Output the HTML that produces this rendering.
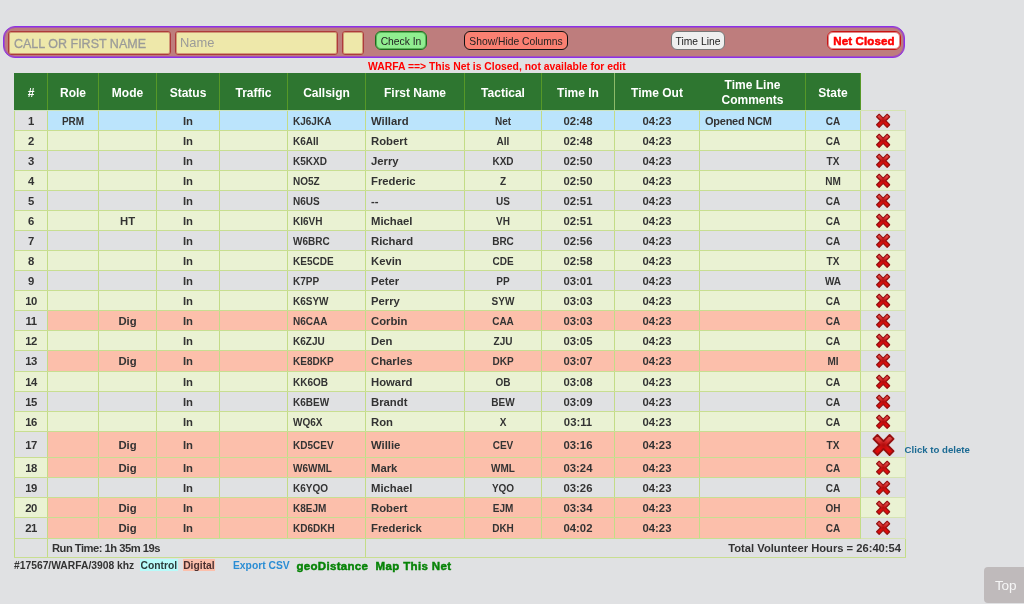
<!DOCTYPE html>
<html lang="en">
<head>
<meta charset="utf-8">
<title>Net Control Manager</title>
<style>
html,body{margin:0;padding:0;}
body{will-change:transform;width:1024px;height:604px;overflow:hidden;background:#e0e1e3;font-family:"Liberation Sans",sans-serif;position:relative;color:#333;}
#bar{position:absolute;left:3px;top:26px;width:900px;height:30px;border:1px solid #8c30e8;box-shadow:inset 0 0 0 1px rgba(140,48,232,.55);border-radius:12px;background:#be7d7d;}
#bar input{position:absolute;top:4px;height:22px;box-sizing:content-box;padding:0 5px;margin:0;border:1px solid #ad3b3b;box-shadow:inset 0 0 0 1px rgba(173,59,59,.45);border-radius:3px;background:#eee8aa;font:12.5px "Liberation Sans",sans-serif;color:#333;outline:none;padding-top:2px;height:20px;}
#bar input::placeholder{color:#9b9b99;opacity:1;-webkit-text-stroke:.3px #9b9b99;}
#Fname::placeholder{-webkit-text-stroke:0 !important;}
#cs1{left:4px;width:151px;letter-spacing:0;}
#Fname{left:171px;width:152px;padding:0 5px 1px 4px !important;height:21px !important;font-size:12.9px !important;}
#custom{left:338px;width:10px;}
#bar button{position:absolute;top:4px;height:19px;box-sizing:border-box;margin:0;padding:1px 0 0;font:10.3px "Liberation Sans",sans-serif;color:#222;border-radius:6px;text-align:center;line-height:17px;}
#ckin{left:371px;width:52px;background:#90ee90;border:1px solid #1c6b1c;box-shadow:inset 0 0 0 1px rgba(28,107,28,.45);}
#cols{left:460px;width:104px;background:#fa8072;border:1px solid #111;}
#tl{left:667px;width:54px;background:#efefef;border:1px solid #777;}
#closed{left:823px;width:74px;background:#fff;border:1px solid #c81414;box-shadow:inset 0 0 0 1px rgba(200,20,20,.5);color:#f00 !important;font-weight:bold !important;font-size:11.5px !important;-webkit-text-stroke:.5px #f00;letter-spacing:.12px;}
#msg{position:absolute;left:368px;top:59.6px;font:bold 10.38px/13px "Liberation Sans",sans-serif;color:#f00;white-space:nowrap;}
table{position:absolute;left:14px;top:73px;border-collapse:collapse;table-layout:fixed;width:891px;font:bold 11px "Liberation Sans",sans-serif;color:#333;}
th{background:#2e7630;color:#fff;font:bold 12px/15px "Liberation Sans",sans-serif;height:34px;padding:3px 0 0;border:1px solid #569828;border-top:none;border-bottom-color:#cbe3bd;text-align:center;vertical-align:middle;}
th:first-child{border-left-color:#2e7630;}
th.nx{background:none;border:none;}
th:nth-child(9){border-right-color:#8dbb6a;}
th:nth-child(10){border-left-color:#8dbb6a;border-right-color:#2e7630;}
th:nth-child(11){border-left-color:#2e7630;}
td{height:18px;padding:1px 0 0;font-size:11.3px;border:1px solid #c3dc87;border-top-color:#c8de91;border-bottom-color:#c8de91;text-align:center;vertical-align:middle;white-space:nowrap;overflow:visible;line-height:13px;}
td.l{text-align:left;padding-left:5px;}
td.cm{font-size:11px;letter-spacing:-.25px;}
td.u{font-size:10px;}
td.n{letter-spacing:-.5px;}
tr.ev td{background:#eaf2d3;}
tr.prm td{background:#bbe4fc;}
tr.dig td{background:#fcbfab;}
tr.prm td.n,tr.prm td.x,tr.dig td.n,tr.dig td.x{background:transparent;}
tr.ev.dig td.n,tr.ev.dig td.x{background:#eaf2d3;}
td.x{position:relative;border-color:#d5e3b2 !important;}
svg.del{width:15px;height:15px;display:block;margin:1px auto 1px;transform:translate(-.35px,-.75px);}
tr.big td{height:24px;}
tr.h21 td{height:19px;}
tr.big svg.del{width:23px;height:23px;margin:0 auto;transform:translate(0,-.5px);}
.tip{position:absolute;left:43.6px;top:11.8px;font:bold 9.65px/12px "Liberation Sans",sans-serif;color:#1b6a93;white-space:nowrap;}
tfoot td{height:18px;padding-top:0;line-height:13px;background:transparent;font-size:11.2px;}
tfoot td.rt{text-align:left;padding-left:4px;letter-spacing:-.5px;}
tfoot td.tv{text-align:right;padding-right:4px;}
#foot{position:absolute;left:14px;top:559px;font:bold 10.3px/14px "Liberation Sans",sans-serif;color:#333;white-space:nowrap;}
#foot span{position:absolute;top:0;}
#foot .ctl{left:126px;background:linear-gradient(#b8fbfa,#b8fbfa) no-repeat 0 0/100% 12px;color:#2b3a3a;padding:0 .5px;}
#foot .dgt{left:168.7px;background:linear-gradient(#fcbfab,#fcbfab) no-repeat 0 0/100% 12px;color:#4a3030;padding:0 .5px;}
#foot .csv{left:219px;color:#2a8dd4;}
#foot .geo{left:282.5px;color:#088408;-webkit-text-stroke:.45px #088408;font-size:11.5px;letter-spacing:.3px;}
#foot .map{left:361.5px;color:#088408;-webkit-text-stroke:.45px #088408;font-size:11.5px;letter-spacing:.36px;}
#top{position:absolute;left:984px;top:567px;width:50px;height:36px;background:#bfbabb;border-radius:4px;color:#f6f6f6;font:13.6px/37px "Liberation Sans",sans-serif;letter-spacing:-.2px;padding-left:11px;box-sizing:border-box;}
</style>
</head>
<body>
<svg width="0" height="0" style="position:absolute"><defs><linearGradient id="xg" x1="0" y1="0" x2="0" y2="1"><stop offset="0" stop-color="#df5c5c"/><stop offset=".5" stop-color="#d61717"/><stop offset="1" stop-color="#e20303"/></linearGradient><radialGradient id="xr" cx=".5" cy=".5" r=".5"><stop offset="0" stop-color="#8a0000" stop-opacity=".5"/><stop offset=".55" stop-color="#8a0000" stop-opacity="0"/></radialGradient></defs></svg>
<div id="bar">
<input id="cs1" type="text" placeholder="CALL OR FIRST NAME">
<input id="Fname" type="text" placeholder="Name">
<input id="custom" type="text">
<button id="ckin">Check In</button>
<button id="cols">Show/Hide Columns</button>
<button id="tl">Time Line</button>
<button id="closed">Net Closed</button>
</div>
<div id="msg">WARFA ==&gt; This Net is Closed, not available for edit</div>
<table>
<colgroup><col style="width:33px"><col style="width:51px"><col style="width:58px"><col style="width:63px"><col style="width:68px"><col style="width:78px"><col style="width:99px"><col style="width:77px"><col style="width:73px"><col style="width:85px"><col style="width:106px"><col style="width:55px"><col style="width:45px"></colgroup>
<thead><tr><th>#</th><th>Role</th><th>Mode</th><th>Status</th><th>Traffic</th><th>Callsign</th><th>First Name</th><th>Tactical</th><th>Time In</th><th>Time Out</th><th>Time Line<br>Comments</th><th>State</th><th class="nx"></th></tr></thead>
<tbody>
<tr class="prm"><td class="n">1</td><td class="c u">PRM</td><td class="c"></td><td class="c">In</td><td class="c"></td><td class="l u">KJ6JKA</td><td class="l">Willard</td><td class="c u">Net</td><td class="c">02:48</td><td class="c">04:23</td><td class="l cm">Opened NCM</td><td class="c u">CA</td><td class="x"><svg class="del" viewBox="0 0 16 16"><path d="M1 3.75 3.75 1 8 5.25 12.25 1 15 3.75 10.75 8 15 12.25 12.25 15 8 10.75 3.75 15 1 12.25 5.25 8Z" fill="url(#xg)" stroke="#961010" stroke-width="1.3" stroke-linejoin="round"/><path d="M1 3.75 3.75 1 8 5.25 12.25 1 15 3.75 10.75 8 15 12.25 12.25 15 8 10.75 3.75 15 1 12.25 5.25 8Z" fill="url(#xr)"/></svg></td></tr>
<tr class="ev"><td class="n">2</td><td class="c u"></td><td class="c"></td><td class="c">In</td><td class="c"></td><td class="l u">K6AII</td><td class="l">Robert</td><td class="c u">AII</td><td class="c">02:48</td><td class="c">04:23</td><td class="l cm"></td><td class="c u">CA</td><td class="x"><svg class="del" viewBox="0 0 16 16"><path d="M1 3.75 3.75 1 8 5.25 12.25 1 15 3.75 10.75 8 15 12.25 12.25 15 8 10.75 3.75 15 1 12.25 5.25 8Z" fill="url(#xg)" stroke="#961010" stroke-width="1.3" stroke-linejoin="round"/><path d="M1 3.75 3.75 1 8 5.25 12.25 1 15 3.75 10.75 8 15 12.25 12.25 15 8 10.75 3.75 15 1 12.25 5.25 8Z" fill="url(#xr)"/></svg></td></tr>
<tr><td class="n">3</td><td class="c u"></td><td class="c"></td><td class="c">In</td><td class="c"></td><td class="l u">K5KXD</td><td class="l">Jerry</td><td class="c u">KXD</td><td class="c">02:50</td><td class="c">04:23</td><td class="l cm"></td><td class="c u">TX</td><td class="x"><svg class="del" viewBox="0 0 16 16"><path d="M1 3.75 3.75 1 8 5.25 12.25 1 15 3.75 10.75 8 15 12.25 12.25 15 8 10.75 3.75 15 1 12.25 5.25 8Z" fill="url(#xg)" stroke="#961010" stroke-width="1.3" stroke-linejoin="round"/><path d="M1 3.75 3.75 1 8 5.25 12.25 1 15 3.75 10.75 8 15 12.25 12.25 15 8 10.75 3.75 15 1 12.25 5.25 8Z" fill="url(#xr)"/></svg></td></tr>
<tr class="ev"><td class="n">4</td><td class="c u"></td><td class="c"></td><td class="c">In</td><td class="c"></td><td class="l u">NO5Z</td><td class="l">Frederic</td><td class="c u">Z</td><td class="c">02:50</td><td class="c">04:23</td><td class="l cm"></td><td class="c u">NM</td><td class="x"><svg class="del" viewBox="0 0 16 16"><path d="M1 3.75 3.75 1 8 5.25 12.25 1 15 3.75 10.75 8 15 12.25 12.25 15 8 10.75 3.75 15 1 12.25 5.25 8Z" fill="url(#xg)" stroke="#961010" stroke-width="1.3" stroke-linejoin="round"/><path d="M1 3.75 3.75 1 8 5.25 12.25 1 15 3.75 10.75 8 15 12.25 12.25 15 8 10.75 3.75 15 1 12.25 5.25 8Z" fill="url(#xr)"/></svg></td></tr>
<tr><td class="n">5</td><td class="c u"></td><td class="c"></td><td class="c">In</td><td class="c"></td><td class="l u">N6US</td><td class="l">--</td><td class="c u">US</td><td class="c">02:51</td><td class="c">04:23</td><td class="l cm"></td><td class="c u">CA</td><td class="x"><svg class="del" viewBox="0 0 16 16"><path d="M1 3.75 3.75 1 8 5.25 12.25 1 15 3.75 10.75 8 15 12.25 12.25 15 8 10.75 3.75 15 1 12.25 5.25 8Z" fill="url(#xg)" stroke="#961010" stroke-width="1.3" stroke-linejoin="round"/><path d="M1 3.75 3.75 1 8 5.25 12.25 1 15 3.75 10.75 8 15 12.25 12.25 15 8 10.75 3.75 15 1 12.25 5.25 8Z" fill="url(#xr)"/></svg></td></tr>
<tr class="ev"><td class="n">6</td><td class="c u"></td><td class="c">HT</td><td class="c">In</td><td class="c"></td><td class="l u">KI6VH</td><td class="l">Michael</td><td class="c u">VH</td><td class="c">02:51</td><td class="c">04:23</td><td class="l cm"></td><td class="c u">CA</td><td class="x"><svg class="del" viewBox="0 0 16 16"><path d="M1 3.75 3.75 1 8 5.25 12.25 1 15 3.75 10.75 8 15 12.25 12.25 15 8 10.75 3.75 15 1 12.25 5.25 8Z" fill="url(#xg)" stroke="#961010" stroke-width="1.3" stroke-linejoin="round"/><path d="M1 3.75 3.75 1 8 5.25 12.25 1 15 3.75 10.75 8 15 12.25 12.25 15 8 10.75 3.75 15 1 12.25 5.25 8Z" fill="url(#xr)"/></svg></td></tr>
<tr><td class="n">7</td><td class="c u"></td><td class="c"></td><td class="c">In</td><td class="c"></td><td class="l u">W6BRC</td><td class="l">Richard</td><td class="c u">BRC</td><td class="c">02:56</td><td class="c">04:23</td><td class="l cm"></td><td class="c u">CA</td><td class="x"><svg class="del" viewBox="0 0 16 16"><path d="M1 3.75 3.75 1 8 5.25 12.25 1 15 3.75 10.75 8 15 12.25 12.25 15 8 10.75 3.75 15 1 12.25 5.25 8Z" fill="url(#xg)" stroke="#961010" stroke-width="1.3" stroke-linejoin="round"/><path d="M1 3.75 3.75 1 8 5.25 12.25 1 15 3.75 10.75 8 15 12.25 12.25 15 8 10.75 3.75 15 1 12.25 5.25 8Z" fill="url(#xr)"/></svg></td></tr>
<tr class="ev"><td class="n">8</td><td class="c u"></td><td class="c"></td><td class="c">In</td><td class="c"></td><td class="l u">KE5CDE</td><td class="l">Kevin</td><td class="c u">CDE</td><td class="c">02:58</td><td class="c">04:23</td><td class="l cm"></td><td class="c u">TX</td><td class="x"><svg class="del" viewBox="0 0 16 16"><path d="M1 3.75 3.75 1 8 5.25 12.25 1 15 3.75 10.75 8 15 12.25 12.25 15 8 10.75 3.75 15 1 12.25 5.25 8Z" fill="url(#xg)" stroke="#961010" stroke-width="1.3" stroke-linejoin="round"/><path d="M1 3.75 3.75 1 8 5.25 12.25 1 15 3.75 10.75 8 15 12.25 12.25 15 8 10.75 3.75 15 1 12.25 5.25 8Z" fill="url(#xr)"/></svg></td></tr>
<tr><td class="n">9</td><td class="c u"></td><td class="c"></td><td class="c">In</td><td class="c"></td><td class="l u">K7PP</td><td class="l">Peter</td><td class="c u">PP</td><td class="c">03:01</td><td class="c">04:23</td><td class="l cm"></td><td class="c u">WA</td><td class="x"><svg class="del" viewBox="0 0 16 16"><path d="M1 3.75 3.75 1 8 5.25 12.25 1 15 3.75 10.75 8 15 12.25 12.25 15 8 10.75 3.75 15 1 12.25 5.25 8Z" fill="url(#xg)" stroke="#961010" stroke-width="1.3" stroke-linejoin="round"/><path d="M1 3.75 3.75 1 8 5.25 12.25 1 15 3.75 10.75 8 15 12.25 12.25 15 8 10.75 3.75 15 1 12.25 5.25 8Z" fill="url(#xr)"/></svg></td></tr>
<tr class="ev"><td class="n">10</td><td class="c u"></td><td class="c"></td><td class="c">In</td><td class="c"></td><td class="l u">K6SYW</td><td class="l">Perry</td><td class="c u">SYW</td><td class="c">03:03</td><td class="c">04:23</td><td class="l cm"></td><td class="c u">CA</td><td class="x"><svg class="del" viewBox="0 0 16 16"><path d="M1 3.75 3.75 1 8 5.25 12.25 1 15 3.75 10.75 8 15 12.25 12.25 15 8 10.75 3.75 15 1 12.25 5.25 8Z" fill="url(#xg)" stroke="#961010" stroke-width="1.3" stroke-linejoin="round"/><path d="M1 3.75 3.75 1 8 5.25 12.25 1 15 3.75 10.75 8 15 12.25 12.25 15 8 10.75 3.75 15 1 12.25 5.25 8Z" fill="url(#xr)"/></svg></td></tr>
<tr class="dig"><td class="n">11</td><td class="c u"></td><td class="c">Dig</td><td class="c">In</td><td class="c"></td><td class="l u">N6CAA</td><td class="l">Corbin</td><td class="c u">CAA</td><td class="c">03:03</td><td class="c">04:23</td><td class="l cm"></td><td class="c u">CA</td><td class="x"><svg class="del" viewBox="0 0 16 16"><path d="M1 3.75 3.75 1 8 5.25 12.25 1 15 3.75 10.75 8 15 12.25 12.25 15 8 10.75 3.75 15 1 12.25 5.25 8Z" fill="url(#xg)" stroke="#961010" stroke-width="1.3" stroke-linejoin="round"/><path d="M1 3.75 3.75 1 8 5.25 12.25 1 15 3.75 10.75 8 15 12.25 12.25 15 8 10.75 3.75 15 1 12.25 5.25 8Z" fill="url(#xr)"/></svg></td></tr>
<tr class="ev"><td class="n">12</td><td class="c u"></td><td class="c"></td><td class="c">In</td><td class="c"></td><td class="l u">K6ZJU</td><td class="l">Den</td><td class="c u">ZJU</td><td class="c">03:05</td><td class="c">04:23</td><td class="l cm"></td><td class="c u">CA</td><td class="x"><svg class="del" viewBox="0 0 16 16"><path d="M1 3.75 3.75 1 8 5.25 12.25 1 15 3.75 10.75 8 15 12.25 12.25 15 8 10.75 3.75 15 1 12.25 5.25 8Z" fill="url(#xg)" stroke="#961010" stroke-width="1.3" stroke-linejoin="round"/><path d="M1 3.75 3.75 1 8 5.25 12.25 1 15 3.75 10.75 8 15 12.25 12.25 15 8 10.75 3.75 15 1 12.25 5.25 8Z" fill="url(#xr)"/></svg></td></tr>
<tr class="dig h21"><td class="n">13</td><td class="c u"></td><td class="c">Dig</td><td class="c">In</td><td class="c"></td><td class="l u">KE8DKP</td><td class="l">Charles</td><td class="c u">DKP</td><td class="c">03:07</td><td class="c">04:23</td><td class="l cm"></td><td class="c u">MI</td><td class="x"><svg class="del" viewBox="0 0 16 16"><path d="M1 3.75 3.75 1 8 5.25 12.25 1 15 3.75 10.75 8 15 12.25 12.25 15 8 10.75 3.75 15 1 12.25 5.25 8Z" fill="url(#xg)" stroke="#961010" stroke-width="1.3" stroke-linejoin="round"/><path d="M1 3.75 3.75 1 8 5.25 12.25 1 15 3.75 10.75 8 15 12.25 12.25 15 8 10.75 3.75 15 1 12.25 5.25 8Z" fill="url(#xr)"/></svg></td></tr>
<tr class="ev"><td class="n">14</td><td class="c u"></td><td class="c"></td><td class="c">In</td><td class="c"></td><td class="l u">KK6OB</td><td class="l">Howard</td><td class="c u">OB</td><td class="c">03:08</td><td class="c">04:23</td><td class="l cm"></td><td class="c u">CA</td><td class="x"><svg class="del" viewBox="0 0 16 16"><path d="M1 3.75 3.75 1 8 5.25 12.25 1 15 3.75 10.75 8 15 12.25 12.25 15 8 10.75 3.75 15 1 12.25 5.25 8Z" fill="url(#xg)" stroke="#961010" stroke-width="1.3" stroke-linejoin="round"/><path d="M1 3.75 3.75 1 8 5.25 12.25 1 15 3.75 10.75 8 15 12.25 12.25 15 8 10.75 3.75 15 1 12.25 5.25 8Z" fill="url(#xr)"/></svg></td></tr>
<tr><td class="n">15</td><td class="c u"></td><td class="c"></td><td class="c">In</td><td class="c"></td><td class="l u">K6BEW</td><td class="l">Brandt</td><td class="c u">BEW</td><td class="c">03:09</td><td class="c">04:23</td><td class="l cm"></td><td class="c u">CA</td><td class="x"><svg class="del" viewBox="0 0 16 16"><path d="M1 3.75 3.75 1 8 5.25 12.25 1 15 3.75 10.75 8 15 12.25 12.25 15 8 10.75 3.75 15 1 12.25 5.25 8Z" fill="url(#xg)" stroke="#961010" stroke-width="1.3" stroke-linejoin="round"/><path d="M1 3.75 3.75 1 8 5.25 12.25 1 15 3.75 10.75 8 15 12.25 12.25 15 8 10.75 3.75 15 1 12.25 5.25 8Z" fill="url(#xr)"/></svg></td></tr>
<tr class="ev"><td class="n">16</td><td class="c u"></td><td class="c"></td><td class="c">In</td><td class="c"></td><td class="l u">WQ6X</td><td class="l">Ron</td><td class="c u">X</td><td class="c">03:11</td><td class="c">04:23</td><td class="l cm"></td><td class="c u">CA</td><td class="x"><svg class="del" viewBox="0 0 16 16"><path d="M1 3.75 3.75 1 8 5.25 12.25 1 15 3.75 10.75 8 15 12.25 12.25 15 8 10.75 3.75 15 1 12.25 5.25 8Z" fill="url(#xg)" stroke="#961010" stroke-width="1.3" stroke-linejoin="round"/><path d="M1 3.75 3.75 1 8 5.25 12.25 1 15 3.75 10.75 8 15 12.25 12.25 15 8 10.75 3.75 15 1 12.25 5.25 8Z" fill="url(#xr)"/></svg></td></tr>
<tr class="dig big"><td class="n">17</td><td class="c u"></td><td class="c">Dig</td><td class="c">In</td><td class="c"></td><td class="l u">KD5CEV</td><td class="l">Willie</td><td class="c u">CEV</td><td class="c">03:16</td><td class="c">04:23</td><td class="l cm"></td><td class="c u">TX</td><td class="x"><svg class="del" viewBox="0 0 16 16"><path d="M1 3.75 3.75 1 8 5.25 12.25 1 15 3.75 10.75 8 15 12.25 12.25 15 8 10.75 3.75 15 1 12.25 5.25 8Z" fill="url(#xg)" stroke="#961010" stroke-width="1.3" stroke-linejoin="round"/><path d="M1 3.75 3.75 1 8 5.25 12.25 1 15 3.75 10.75 8 15 12.25 12.25 15 8 10.75 3.75 15 1 12.25 5.25 8Z" fill="url(#xr)"/></svg><span class="tip">Click to delete</span></td></tr>
<tr class="ev dig"><td class="n">18</td><td class="c u"></td><td class="c">Dig</td><td class="c">In</td><td class="c"></td><td class="l u">W6WML</td><td class="l">Mark</td><td class="c u">WML</td><td class="c">03:24</td><td class="c">04:23</td><td class="l cm"></td><td class="c u">CA</td><td class="x"><svg class="del" viewBox="0 0 16 16"><path d="M1 3.75 3.75 1 8 5.25 12.25 1 15 3.75 10.75 8 15 12.25 12.25 15 8 10.75 3.75 15 1 12.25 5.25 8Z" fill="url(#xg)" stroke="#961010" stroke-width="1.3" stroke-linejoin="round"/><path d="M1 3.75 3.75 1 8 5.25 12.25 1 15 3.75 10.75 8 15 12.25 12.25 15 8 10.75 3.75 15 1 12.25 5.25 8Z" fill="url(#xr)"/></svg></td></tr>
<tr><td class="n">19</td><td class="c u"></td><td class="c"></td><td class="c">In</td><td class="c"></td><td class="l u">K6YQO</td><td class="l">Michael</td><td class="c u">YQO</td><td class="c">03:26</td><td class="c">04:23</td><td class="l cm"></td><td class="c u">CA</td><td class="x"><svg class="del" viewBox="0 0 16 16"><path d="M1 3.75 3.75 1 8 5.25 12.25 1 15 3.75 10.75 8 15 12.25 12.25 15 8 10.75 3.75 15 1 12.25 5.25 8Z" fill="url(#xg)" stroke="#961010" stroke-width="1.3" stroke-linejoin="round"/><path d="M1 3.75 3.75 1 8 5.25 12.25 1 15 3.75 10.75 8 15 12.25 12.25 15 8 10.75 3.75 15 1 12.25 5.25 8Z" fill="url(#xr)"/></svg></td></tr>
<tr class="ev dig"><td class="n">20</td><td class="c u"></td><td class="c">Dig</td><td class="c">In</td><td class="c"></td><td class="l u">K8EJM</td><td class="l">Robert</td><td class="c u">EJM</td><td class="c">03:34</td><td class="c">04:23</td><td class="l cm"></td><td class="c u">OH</td><td class="x"><svg class="del" viewBox="0 0 16 16"><path d="M1 3.75 3.75 1 8 5.25 12.25 1 15 3.75 10.75 8 15 12.25 12.25 15 8 10.75 3.75 15 1 12.25 5.25 8Z" fill="url(#xg)" stroke="#961010" stroke-width="1.3" stroke-linejoin="round"/><path d="M1 3.75 3.75 1 8 5.25 12.25 1 15 3.75 10.75 8 15 12.25 12.25 15 8 10.75 3.75 15 1 12.25 5.25 8Z" fill="url(#xr)"/></svg></td></tr>
<tr class="dig h21"><td class="n">21</td><td class="c u"></td><td class="c">Dig</td><td class="c">In</td><td class="c"></td><td class="l u">KD6DKH</td><td class="l">Frederick</td><td class="c u">DKH</td><td class="c">04:02</td><td class="c">04:23</td><td class="l cm"></td><td class="c u">CA</td><td class="x"><svg class="del" viewBox="0 0 16 16"><path d="M1 3.75 3.75 1 8 5.25 12.25 1 15 3.75 10.75 8 15 12.25 12.25 15 8 10.75 3.75 15 1 12.25 5.25 8Z" fill="url(#xg)" stroke="#961010" stroke-width="1.3" stroke-linejoin="round"/><path d="M1 3.75 3.75 1 8 5.25 12.25 1 15 3.75 10.75 8 15 12.25 12.25 15 8 10.75 3.75 15 1 12.25 5.25 8Z" fill="url(#xr)"/></svg></td></tr>
</tbody>
<tfoot><tr><td></td><td class="rt" colspan="5">Run Time: 1h 35m 19s</td><td class="tv" colspan="7">Total Volunteer Hours = 26:40:54</td></tr></tfoot>
</table>
<div id="foot">#17567/WARFA/3908 khz<span class="ctl">Control</span><span class="dgt">Digital</span><span class="csv">Export CSV</span><span class="geo">geoDistance</span><span class="map">Map This Net</span></div>
<div id="top">Top</div>
</body>
</html>
